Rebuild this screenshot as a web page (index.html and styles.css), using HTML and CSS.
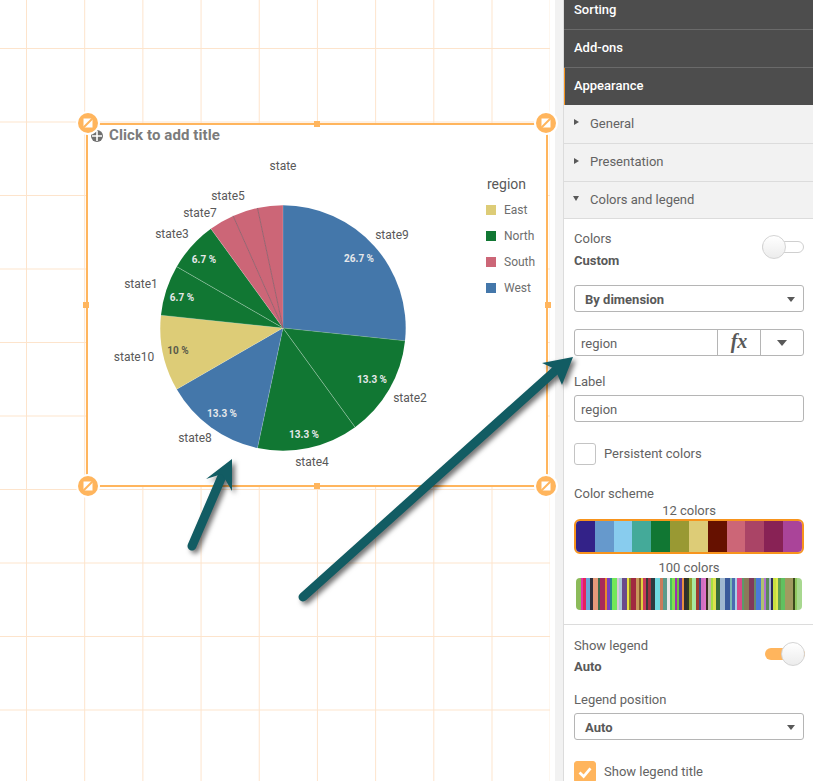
FILE: index.html
```html
<!DOCTYPE html>
<html lang="en">
<head>
<meta charset="utf-8">
<title>Pie chart appearance</title>
<link rel="stylesheet" href="styles.css">
</head>
<body>
<div class="app">
  <main class="canvas">
    <div class="grid"></div>
    <section class="card">
      <span class="handle h-tl"><svg viewBox="0 0 20 20"><circle cx="10" cy="10" r="10" class="hc"/><path d="M5.500 5.500h9v9h-9z" class="hw"/><path d="M4.500 15.500 15.500 4.500" class="hs"/></svg></span>
      <span class="handle h-tr"><svg viewBox="0 0 20 20"><circle cx="10" cy="10" r="10" class="hc"/><path d="M5.500 5.500h9v9h-9z" class="hw"/><path d="M4.500 15.500 15.500 4.500" class="hs"/></svg></span>
      <span class="handle h-bl"><svg viewBox="0 0 20 20"><circle cx="10" cy="10" r="10" class="hc"/><path d="M5.500 5.500h9v9h-9z" class="hw"/><path d="M4.500 15.500 15.500 4.500" class="hs"/></svg></span>
      <span class="handle h-br"><svg viewBox="0 0 20 20"><circle cx="10" cy="10" r="10" class="hc"/><path d="M5.500 5.500h9v9h-9z" class="hw"/><path d="M4.500 15.500 15.500 4.500" class="hs"/></svg></span>
      <span class="mid m-t"></span><span class="mid m-b"></span><span class="mid m-l"></span><span class="mid m-r"></span>
      <header class="card-title">
        <svg class="plus" viewBox="0 0 12 12"><circle cx="6" cy="6" r="6"/><path d="M6 1v10M1 6h10"/></svg>
        <span>Click to add title</span>
      </header>
      <div class="card-body">
        <svg class="pie" viewBox="88 150 390 330" width="390" height="330">
          <path class="west" d="M283 328V205.300A122.700 122.700 0 0 1 405.030 340.830Z"/>
          <path class="north" d="M283 328 405.030 340.830A122.700 122.700 0 0 1 355.120 427.270Z"/>
          <path class="north" d="M283 328 355.120 427.270A122.700 122.700 0 0 1 257.490 448.020Z"/>
          <path class="west" d="M283 328 257.490 448.020A122.700 122.700 0 0 1 176.740 389.350Z"/>
          <path class="east" d="M283 328 176.740 389.350A122.700 122.700 0 0 1 160.970 315.170Z"/>
          <path class="north" d="M283 328 160.970 315.170A122.700 122.700 0 0 1 176.740 266.650Z"/>
          <path class="north" d="M283 328 176.740 266.650A122.700 122.700 0 0 1 210.880 228.730Z"/>
          <path class="south" d="M283 328 210.880 228.730A122.700 122.700 0 0 1 233.100 215.910Z"/>
          <path class="south" d="M283 328 233.100 215.910A122.700 122.700 0 0 1 257.490 207.980Z"/>
          <path class="south" d="M283 328 257.490 207.980A122.700 122.700 0 0 1 283 205.300Z"/>
          <path class="sep" d="M283 328 355.120 427.270M283 328 176.740 266.650"/>
          <path class="sep-edge" d="M283 328 405.030 340.830M283 328 257.490 448.020M283 328 176.740 389.350M283 328 160.970 315.170M283 328 210.880 228.730M283 328V205.300"/>
          <path class="sep-dark" d="M283 328 233.100 215.910M283 328 257.490 207.980"/>
          <text class="lbl" x="283" y="170">state</text>
          <text class="lbl" x="228" y="200">state5</text>
          <text class="lbl" x="200" y="217">state7</text>
          <text class="lbl" x="172" y="238">state3</text>
          <text class="lbl" x="141" y="288">state1</text>
          <text class="lbl" x="134" y="361">state10</text>
          <text class="lbl" x="195" y="442">state8</text>
          <text class="lbl" x="312" y="466">state4</text>
          <text class="lbl" x="410" y="402">state2</text>
          <text class="lbl" x="392" y="239">state9</text>
          <text class="pct" x="359" y="262">26.7 %</text>
          <text class="pct" x="372" y="383">13.3 %</text>
          <text class="pct" x="304" y="438">13.3 %</text>
          <text class="pct" x="222" y="417">13.3 %</text>
          <text class="pct dark" x="178" y="354">10 %</text>
          <text class="pct" x="204" y="263">6.7 %</text>
          <text class="pct" x="182" y="301">6.7 %</text>
        </svg>
        <aside class="legend">
          <h3 class="legend-title">region</h3>
          <div class="legend-item"><i class="sw sw-east"></i>East</div>
          <div class="legend-item"><i class="sw sw-north"></i>North</div>
          <div class="legend-item"><i class="sw sw-south"></i>South</div>
          <div class="legend-item"><i class="sw sw-west"></i>West</div>
        </aside>
      </div>
    </section>
  </main>
  <aside class="side">
    <div class="panel">
      <div class="head h1">Sorting</div>
      <div class="head h2">Add-ons</div>
      <div class="head h3 active">Appearance</div>
      <div class="acc a1"><i class="tri-r"></i>General</div>
      <div class="acc a2"><i class="tri-r"></i>Presentation</div>
      <div class="acc a3"><i class="tri-d"></i>Colors and legend</div>
      <div class="form">
        <div class="switch-row">
          <div>
            <div class="txt">Colors</div>
            <div class="txt strong gap-6">Custom</div>
          </div>
          <span class="toggle off"><b></b></span>
        </div>
        <div class="select mt-16"><span>By dimension</span><i class="caret"></i></div>
        <div class="combo mt-17">
          <span class="combo-val">region</span>
          <span class="combo-fx">fx</span>
          <span class="combo-btn"><i class="caret big"></i></span>
        </div>
        <div class="txt mt-18">Label</div>
        <div class="input gap-5">region</div>
        <label class="check mt-21"><span class="box"></span><span class="check-txt">Persistent colors</span></label>
        <div class="txt mt-21">Color scheme</div>
        <div class="txt center gap-1">12 colors</div>
        <div class="scheme">
          <i class="c1"></i><i class="c2"></i><i class="c3"></i><i class="c4"></i><i class="c5"></i><i class="c6"></i><i class="c7"></i><i class="c8"></i><i class="c9"></i><i class="c10"></i><i class="c11"></i><i class="c12"></i>
        </div>
        <div class="txt center mt-6">100 colors</div>
        <div class="strip">
          <i style="background:#8cbb5a"></i><i style="background:#8cbb5a"></i><i style="background:#e832a8"></i><i style="background:#e6225a"></i><i style="background:#6aa5d8"></i><i style="background:#6aa5d8"></i><i style="background:#2e2e3a"></i><i style="background:#e59a7a"></i><i style="background:#e59a7a"></i><i style="background:#3d6a4a"></i><i style="background:#a82a5a"></i><i style="background:#a82a5a"></i><i style="background:#e88a2a"></i><i style="background:#7a3fc0"></i><i style="background:#2a8a8a"></i><i style="background:#72e85a"></i><i style="background:#72e85a"></i><i style="background:#d8c8d8"></i><i style="background:#a8c8d8"></i><i style="background:#6a4a8a"></i><i style="background:#6a4a8a"></i><i style="background:#e8e040"></i><i style="background:#8a7a2a"></i><i style="background:#a02a40"></i><i style="background:#a02a40"></i><i style="background:#c89a5a"></i><i style="background:#8a5a2a"></i><i style="background:#e0d040"></i><i style="background:#c83a5a"></i><i style="background:#3a3a3a"></i><i style="background:#a03040"></i><i style="background:#2a3a40"></i><i style="background:#2a3a40"></i><i style="background:#70d8e0"></i><i style="background:#70d8e0"></i><i style="background:#c87a5a"></i><i style="background:#5a9a8a"></i><i style="background:#5a9a8a"></i><i style="background:#e8e8e8"></i><i style="background:#48c060"></i><i style="background:#80e050"></i><i style="background:#a030b0"></i><i style="background:#70c040"></i><i style="background:#5a3a9a"></i><i style="background:#e89040"></i><i style="background:#2e2e2e"></i><i style="background:#2e3a20"></i><i style="background:#90a030"></i><i style="background:#a8e8a0"></i><i style="background:#a8e8a0"></i><i style="background:#a03a30"></i><i style="background:#3a4a8a"></i><i style="background:#d070c0"></i><i style="background:#e070c8"></i><i style="background:#3a2a20"></i><i style="background:#c0b8a8"></i><i style="background:#a8e040"></i><i style="background:#e0e050"></i><i style="background:#3a6a3a"></i><i style="background:#3a6a3a"></i><i style="background:#a0b8d0"></i><i style="background:#a0b8d0"></i><i style="background:#3a5a9a"></i><i style="background:#3a5a9a"></i><i style="background:#7ab8b0"></i><i style="background:#4a6ab0"></i><i style="background:#a8d0e8"></i><i style="background:#d84a8a"></i><i style="background:#d84a8a"></i><i style="background:#5a9a6a"></i><i style="background:#8a7a5a"></i><i style="background:#8a7a5a"></i><i style="background:#803a5a"></i><i style="background:#803a5a"></i><i style="background:#6a8a6a"></i><i style="background:#4a7ad8"></i><i style="background:#4a7ad8"></i><i style="background:#b0c070"></i><i style="background:#b070d0"></i><i style="background:#5a8a5a"></i><i style="background:#a8b0d0"></i><i style="background:#2a2a5a"></i><i style="background:#c8e040"></i><i style="background:#e0e850"></i><i style="background:#60a050"></i><i style="background:#60c060"></i><i style="background:#60c060"></i><i style="background:#a09a60"></i><i style="background:#a09a60"></i><i style="background:#a09a60"></i><i style="background:#3a4a1a"></i><i style="background:#90c860"></i><i style="background:#a8d890"></i><i style="background:#a8d890"></i>
        </div>
      </div>
      <div class="form second">
        <div class="switch-row">
          <div>
            <div class="txt">Show legend</div>
            <div class="txt strong gap-5">Auto</div>
          </div>
          <span class="toggle on"><b></b></span>
        </div>
        <div class="txt mt-17">Legend position</div>
        <div class="select gap-5"><span>Auto</span><i class="caret"></i></div>
        <label class="check mt-21"><span class="box checked"><svg viewBox="0 0 22 22"><path d="M5 11.500 9.500 16 17 7"/></svg></span><span class="check-txt">Show legend title</span></label>
      </div>
    </div>
  </aside>
  <svg class="arrows" viewBox="0 0 813 781" width="813" height="781">
    <g class="arrow">
      <path class="shaft" d="M192 546 223 474"/>
      <path class="head-tip" d="M232 459 206 479 222 474 232 491Z"/>
    </g>
    <g class="arrow">
      <path class="shaft" d="M303 597 556 370"/>
      <path class="head-tip" d="M573 357 542 363 555 369 562 385Z"/>
    </g>
  </svg>
</div>
</body>
</html>
```
FILE: styles.css
```css
* { box-sizing: border-box; }
html, body { margin: 0; padding: 0; height: 781px; overflow: hidden; background: #fff; }
body { font-family: Roboto, "Liberation Sans", sans-serif; }
.app { position: relative; display: flex; width: 813px; height: 781px; overflow: hidden; }

/* canvas */
.canvas { position: relative; width: 555px; height: 781px; background: #fff; flex: none; }
.grid {
  width: 550px; height: 781px;
  background-image:
    linear-gradient(to right, #fde4cc 1px, transparent 1px),
    linear-gradient(to bottom, #fde4cc 1px, transparent 1px);
  background-size: 58.2px 73.5px;
  background-position: 26px 48px;
}
.card {
  position: absolute; left: 86px; top: 123px; width: 462px; height: 364px;
  background: #fff; border: 2px solid #ffb55d;
}
.handle {
  position: absolute; width: 24px; height: 24px; padding: 2px; border-radius: 50%; background: #fff; z-index: 2;
}
.handle svg { display: block; width: 20px; height: 20px; }
.hc { fill: #ffb55d; }
.hw { fill: #fff; }
.hs { stroke: #ffb55d; stroke-width: 2; fill: none; }
.h-tl { left: -12px; top: -14px; }
.h-tr { right: -12px; top: -14px; }
.h-bl { left: -12px; bottom: -13px; }
.h-br { right: -12px; bottom: -13px; }
.mid { position: absolute; width: 6px; height: 6px; background: #ffb55d; z-index: 2; }
.m-t { left: 226px; top: -4px; }
.m-b { left: 226px; bottom: -4px; }
.m-l { left: -5px; top: 177px; }
.m-r { right: -5px; top: 177px; }

.card-title {
  display: flex; align-items: center; gap: 6px; height: 25px; padding: 0 0 5px 3px;
  font-size: 15px; font-weight: 700; color: #7b7b7b; line-height: 16px; letter-spacing: .1px;
}
.plus { width: 12px; height: 12px; flex: none; margin-top: 2px; }
.plus circle { fill: #6f6f6f; }
.plus path { stroke: #fff; stroke-width: 1.600; fill: none; }
.card-body { display: flex; }
.pie { flex: none; display: block; }
.west { fill: #4477aa; }
.north { fill: #117733; }
.south { fill: #cc6677; }
.east { fill: #ddcc77; }
.sep { stroke: rgba(255,255,255,.45); stroke-width: .7; fill: none; }
.sep-edge { stroke: rgba(255,255,255,.3); stroke-width: .6; fill: none; }
.sep-dark { stroke: #96636f; stroke-width: 1; fill: none; }
.lbl { font-size: 12px; fill: #595959; text-anchor: middle; font-family: Roboto, sans-serif; }
.pct { font-size: 10px; font-weight: 700; fill: #e6e8ea; text-anchor: middle; font-family: Roboto, sans-serif; }
.pct.dark { fill: #5a5a4a; }

.legend { margin-left: 8px; padding-top: 26px; width: 60px; }
.legend-title { margin: 0 0 5px 1px; font-size: 14px; line-height: 16px; font-weight: 400; color: #595959; }
.legend-item { display: flex; align-items: center; gap: 8px; height: 26px; font-size: 12px; color: #6e6e6e; }
.sw { display: block; width: 10px; height: 10px; flex: none; }
.sw-east { background: #ddcc77; }
.sw-north { background: #117733; }
.sw-south { background: #cc6677; }
.sw-west { background: #4477aa; }

/* sidebar */
.side { width: 258px; flex: none; height: 781px; background: #f2f2f2; padding-left: 8px; }
.panel { width: 250px; height: 781px; background: #fff; border-left: 1px solid #dcdcdc; overflow: hidden; }
.head {
  background: #4d4d4d; color: #fff; font-size: 13px; font-weight: 500; padding-left: 10px;
  border-bottom: 1px solid #6a6a6a; display: flex; align-items: center;
}
.h1 { height: 30px; padding-bottom: 11px; }
.h2 { height: 38px; padding-bottom: 2px; }
.h3 { height: 37px; border-bottom: 0; padding-bottom: 2px; }
.head.active { border-left: 2px solid #f7941d; margin-left: -1px; padding-left: 9px; }
.acc {
  background: #f2f2f2; color: #636363; font-size: 13px; display: flex; align-items: center;
  border-bottom: 1px solid #dcdcdc; padding: 0 0 2px 10px;
}
.a1 { height: 39px; }
.a2 { height: 38px; }
.a3 { height: 37px; }
.tri-r { width: 0; height: 0; border-left: 5px solid #595959; border-top: 3.500px solid transparent; border-bottom: 3.500px solid transparent; margin-right: 11px; margin-top: -2px; }
.tri-d { width: 0; height: 0; border-top: 5px solid #595959; border-left: 3.500px solid transparent; border-right: 3.500px solid transparent; margin-right: 11px; margin-left: -1px; margin-top: -2px; }

.form { padding: 12px 9px 14px 10px; border-bottom: 1px solid #dcdcdc; }
.form.second { padding-top: 13px; border-bottom: 0; }
.txt { font-size: 13px; line-height: 16px; color: #636363; }
.strong { font-weight: 700; color: #595959; }
.center { text-align: center; }
.gap-1 { margin-top: 1px; }
.gap-5 { margin-top: 5px; }
.gap-6 { margin-top: 6px; }
.mt-6 { margin-top: 6px; }
.mt-16 { margin-top: 16px; }
.mt-17 { margin-top: 17px; }
.mt-18 { margin-top: 18px; }
.mt-21 { margin-top: 21px; }

.switch-row { display: flex; justify-content: space-between; align-items: center; }
.toggle { position: relative; display: block; height: 12px; border-radius: 6px; }
.toggle b { position: absolute; width: 24px; height: 24px; top: -6px; border-radius: 50%; border: 1px solid #d4d4d4; background: linear-gradient(#fff, #ececec); }
.toggle.off { width: 42px; border: 1px solid #cfcfcf; background: #fff; margin-top: -6px; }
.toggle.off b { left: -1px; top: -7px; }
.toggle.on { width: 40px; background: #ffb55d; margin-right: -1px; margin-top: -6px; }
.toggle.on b { right: 0; }

.select {
  display: flex; align-items: center; justify-content: space-between; height: 27px; padding: 1px 8px 0 10px;
  border: 1px solid #b5b5b5; border-radius: 3px; font-size: 13px; font-weight: 700; color: #595959; background: #fff;
}
.caret { display: block; width: 0; height: 0; border-top: 5px solid #595959; border-left: 4px solid transparent; border-right: 4px solid transparent; }
.caret.big { border-top-width: 6px; border-left-width: 5.500px; border-right-width: 5.500px; }
.combo { display: flex; height: 27px; border: 1px solid #b5b5b5; border-radius: 3px; font-size: 13px; color: #636363; }
.combo-val { flex: 1; padding-left: 6px; line-height: 27px; }
.combo-fx { width: 43px; border-left: 1px solid #b5b5b5; text-align: center; font: italic 700 20px/23px "Liberation Serif", serif; color: #595959; }
.combo-btn { width: 43px; border-left: 1px solid #b5b5b5; display: flex; align-items: center; justify-content: center; }
.input { height: 27px; padding-left: 6px; line-height: 27px; border: 1px solid #b5b5b5; border-radius: 3px; font-size: 13px; color: #636363; }
.check { display: flex; align-items: center; gap: 8px; font-size: 13px; color: #636363; height: 22px; }
.check-txt { margin-top: -2px; }
.box { display: block; width: 22px; height: 22px; border: 1px solid #c4c4c4; border-radius: 3px; background: #fff; flex: none; }
.box.checked { background: #ffb55d; border-color: #ffb55d; }
.box svg { display: block; width: 20px; height: 20px; }
.box path { stroke: #fff; stroke-width: 3; fill: none; }

.scheme { display: flex; height: 35px; border: 2px solid #f7941d; border-radius: 6px; overflow: hidden; }
.scheme i { flex: 1; display: block; }
.c1 { background: #332288; } .c2 { background: #6699cc; } .c3 { background: #88ccee; } .c4 { background: #44aa99; }
.c5 { background: #117733; } .c6 { background: #999933; } .c7 { background: #ddcc77; } .c8 { background: #661100; }
.c9 { background: #cc6677; } .c10 { background: #aa4466; } .c11 { background: #882255; } .c12 { background: #aa4499; }
.strip { display: flex; height: 32px; margin: 2px 2px 0; border-radius: 4px; overflow: hidden; }
.strip i { flex: 1; display: block; }

/* annotation arrows over the page */
.arrows { position: absolute; left: 0; top: 0; pointer-events: none; z-index: 5; }
.arrow { filter: drop-shadow(3px 3px 2.500px rgba(0,0,0,.55)); }
.shaft { stroke: #125c63; stroke-width: 9; stroke-linecap: round; fill: none; }
.head-tip { fill: #125c63; }
```
